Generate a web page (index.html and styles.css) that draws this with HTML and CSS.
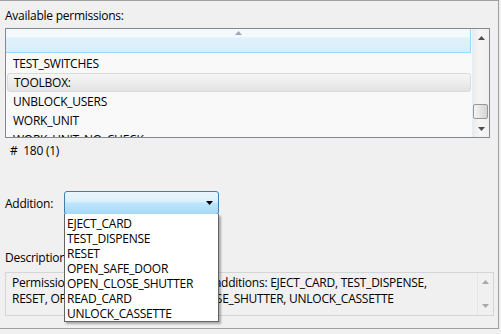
FILE: index.html
```html
<!DOCTYPE html>
<html>
<head>
<meta charset="utf-8">
<link rel="stylesheet" href="styles.css">
</head>
<body>
<div class="panel">
  <div class="label">Available permissions:</div>
  <div class="listbox">
    <div class="list-area">
      <div class="list-header"><svg class="sort-caret" width="7" height="4" viewBox="0 0 7 4"><path d="M0 4 L3.5 0 L7 4 Z" fill="#9aa8b8"/></svg></div>
      <div class="row">TEST_SWITCHES</div>
      <div class="row selected">TOOLBOX:</div>
      <div class="row">UNBLOCK_USERS</div>
      <div class="row">WORK_UNIT</div>
      <div class="row">WORK_UNIT_NO_CHECK</div>
    </div>
    <div class="vscroll">
      <div class="sbtn"><svg width="7" height="4" viewBox="0 0 7 4"><path d="M0 4 L3.5 0 L7 4 Z" fill="#4d4d4d"/></svg></div>
      <div class="track"><div class="thumb"></div></div>
      <div class="sbtn"><svg width="7" height="4" viewBox="0 0 7 4"><path d="M0 0 L7 0 L3.5 4 Z" fill="#4d4d4d"/></svg></div>
    </div>
  </div>
  <div class="count">#&nbsp; 180 (1)</div>
  <div class="addition-row">
    <span class="addition-label">Addition:</span>
    <div class="combo-wrap">
      <div class="combo">
        <svg class="combo-arrow" width="7" height="4" viewBox="0 0 7 4"><path d="M0 0 L7 0 L3.5 4 Z" fill="#000"/></svg>
      </div>
      <ul class="dropdown">
        <li>EJECT_CARD</li>
        <li>TEST_DISPENSE</li>
        <li>RESET</li>
        <li>OPEN_SAFE_DOOR</li>
        <li>OPEN_CLOSE_SHUTTER</li>
        <li>READ_CARD</li>
        <li>UNLOCK_CASSETTE</li>
      </ul>
    </div>
  </div>
  <div class="label desc-label">Description</div>
  <div class="desc">
    <div class="desc-text">Permission TOOLBOX: contains these additions: EJECT_CARD, TEST_DISPENSE,<br>RESET, OPEN_SAFE_DOOR, OPEN_CLOSE_SHUTTER, UNLOCK_CASSETTE</div>
    <div class="desc-scroll">
      <svg width="7" height="4" viewBox="0 0 7 4"><path d="M0 4 L3.5 0 L7 4 Z" fill="#a8a8a8"/></svg>
      <svg width="7" height="4" viewBox="0 0 7 4"><path d="M0 0 L7 0 L3.5 4 Z" fill="#a8a8a8"/></svg>
    </div>
  </div>
</div>
</body>
</html>
```
FILE: styles.css
```css
* { box-sizing: border-box; }
html, body { margin: 0; padding: 0; }
body {
  background: #f0f0f0;
  font-family: "Open Sans", "Noto Sans", sans-serif;
  font-size: 12px;
  line-height: 16px;
  letter-spacing: -0.25px;
  color: #000;
  width: 501px;
  height: 334px;
  overflow: hidden;
}
.panel {
  width: 499px;
  height: 329px;
  border-top: 1px solid #a0a0a0;
  border-right: 1px solid #a0a0a0;
  border-bottom: 1px solid #a0a0a0;
  padding: 7px 0 0 5px;
  display: flex;
  flex-direction: column;
}
.label { height: 16px; }
.listbox {
  margin-top: 4px;
  width: 485px;
  height: 110px;
  border: 1px solid #828790;
  display: flex;
  background: #f9f9f9;
}
.list-area {
  flex: 1;
  overflow: hidden;
  display: flex;
  flex-direction: column;
}
.list-header {
  flex: none;
  height: 24px;
  margin: 0 1px 1px 0;
  border-right: 1px solid #97d7f7;
  border-bottom: 1px solid #97d7f7;
  background: linear-gradient(to bottom, #f3f9fd 0, #f3f9fd 8px, #dff1fb 9px, #d9eefa 100%);
  display: flex;
  justify-content: center;
  padding-top: 2px;
}
.sort-caret { display: block; }
.row {
  flex: none;
  height: 19px;
  line-height: 19px;
  padding-left: 7px;
  white-space: nowrap;
}
.row.selected {
  margin: 0 1px;
  padding-left: 6px;
  border: 1px solid #dadada;
  border-radius: 3px;
  line-height: 17px;
  background: linear-gradient(to bottom, #f6f6f6, #e3e3e3);
}
.vscroll {
  width: 17px;
  flex: none;
  display: flex;
  flex-direction: column;
  border-left: 1px solid #e4edf6;
  background: linear-gradient(to right, #ebebeb, #f5f5f5 40%, #f0f0f0);
}
.sbtn {
  height: 17px;
  flex: none;
  display: flex;
  align-items: center;
  justify-content: center;
}
.sbtn svg { display: block; }
.track {
  flex: 1;
  display: flex;
  flex-direction: column;
  justify-content: flex-end;
  padding: 0 0 1px 0;
}
.thumb {
  height: 15px;
  width: 15px;
  border: 1px solid #979797;
  border-radius: 2px;
  background: linear-gradient(to right, #f4f4f4, #e4e4e4 50%, #d4d4d4);
}
.count {
  margin-top: 5px;
  padding-left: 5px;
  height: 16px;
}
.addition-row {
  margin-top: 32px;
  display: flex;
  align-items: center;
  height: 24px;
}
.addition-label {
  width: 59px;
  flex: none;
  padding-top: 1px;
}
.combo-wrap {
  position: relative;
  width: 155px;
  height: 24px;
}
.combo {
  height: 24px;
  border: 1px solid #3c7fb1;
  border-radius: 3px;
  background: linear-gradient(to bottom, #eaf6fd 0, #d9f0fc 45%, #bee6fd 50%, #a7d9f5 100%);
  display: flex;
  align-items: center;
  justify-content: flex-end;
  padding-right: 5px;
}
.combo-arrow { display: block; }
.dropdown {
  position: absolute;
  top: 23px;
  left: 0;
  width: 155px;
  height: 108px;
  margin: 0;
  padding: 2px 0 0 0;
  list-style: none;
  background: #fff;
  border: 1px solid #646464;
  border-top: none;
  box-shadow: 2px 2px 2px rgba(0,0,0,0.3);
  z-index: 5;
}
.dropdown li {
  height: 15px;
  line-height: 15px;
  padding-left: 2px;
  color: #000;
  white-space: nowrap;
}
.desc-label { margin-top: 35px; }
.desc {
  margin-top: 6px;
  width: 489px;
  height: 44px;
  border: 1px solid #d5d5d5;
  display: flex;
}
.desc-text {
  flex: 1;
  padding: 2px 0 0 6px;
  white-space: nowrap;
  overflow: hidden;
}
.desc-scroll {
  width: 16px;
  flex: none;
  border-left: 1px solid #e6e6e6;
  display: flex;
  flex-direction: column;
  align-items: center;
  justify-content: space-between;
  padding: 7px 0 7px 0;
}
.desc-scroll svg { display: block; }
```
